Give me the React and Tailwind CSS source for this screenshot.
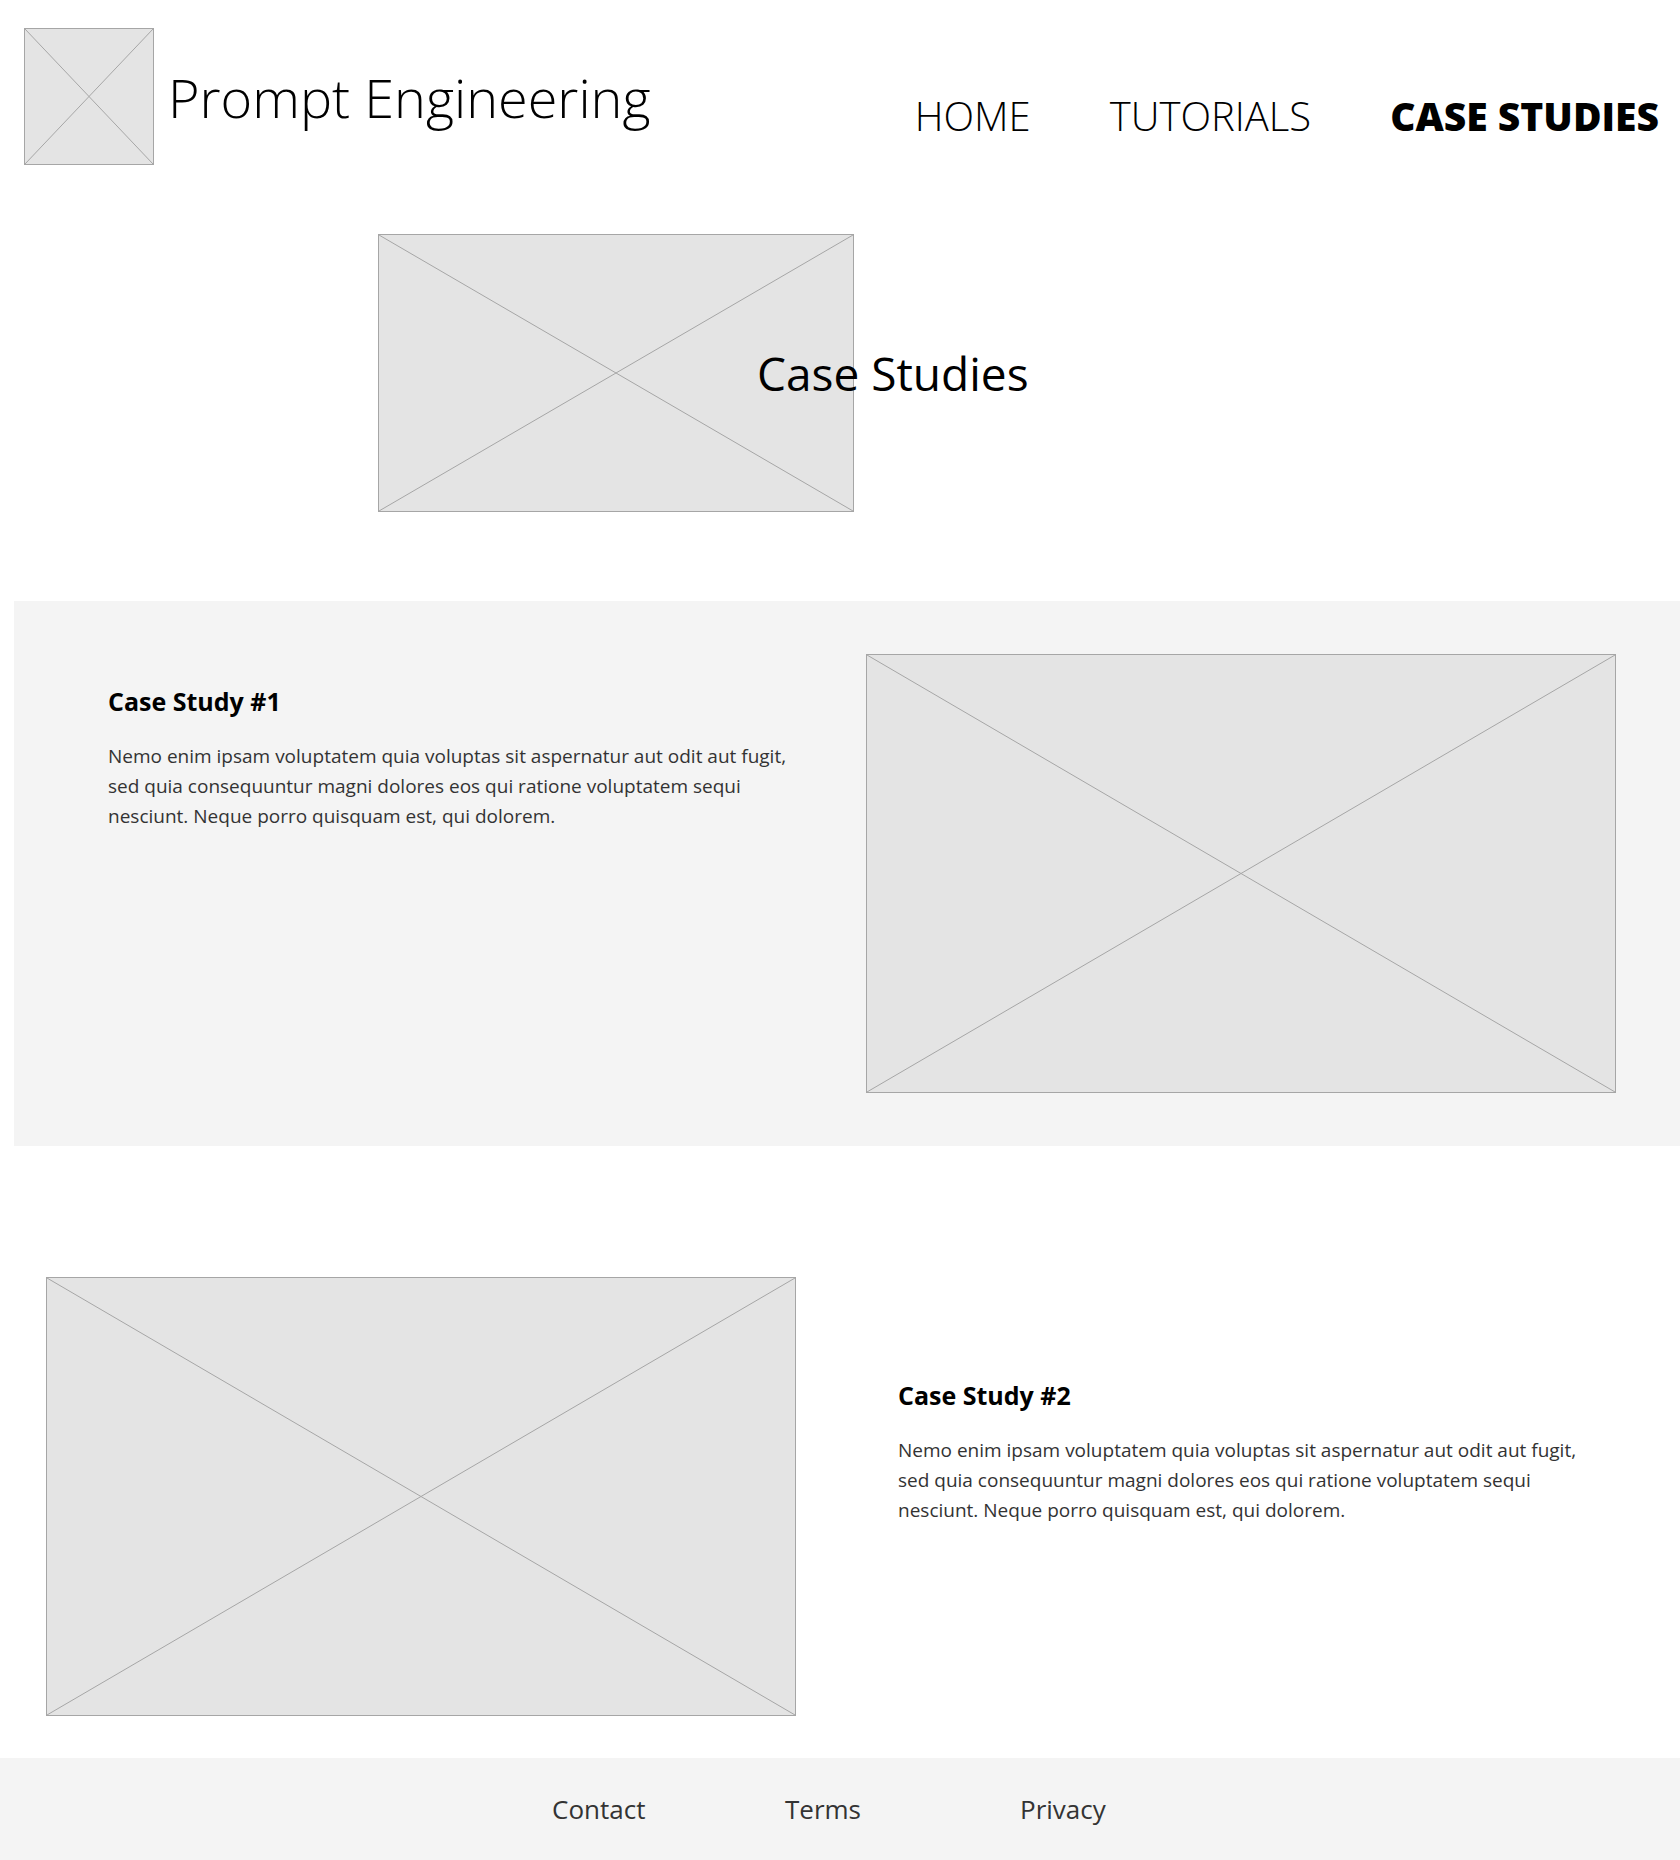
import React from "react";

const font = { fontFamily: "'Open Sans', 'Noto Sans', sans-serif" };

const Placeholder = ({ className }) => (
    <div className={`relative bg-[#e4e4e4] border border-[#a6a6a6] ${className}`}>
        <svg className="absolute inset-0 w-full h-full" viewBox="0 0 100 100" preserveAspectRatio="none">
            <line x1="0" y1="0" x2="100" y2="100" stroke="#a6a6a6" strokeWidth="1" vectorEffect="non-scaling-stroke" />
            <line x1="100" y1="0" x2="0" y2="100" stroke="#a6a6a6" strokeWidth="1" vectorEffect="non-scaling-stroke" />
        </svg>
    </div>
);

const CaseText = ({ title }) => (
    <div>
        <h2 className="text-[25px] font-bold text-black leading-[30px]">{title}</h2>
        <p className="mt-[25px] text-[19px] leading-[30px] text-[#333]">
            Nemo enim ipsam voluptatem quia voluptas sit aspernatur aut odit aut fugit,<br />
            sed quia consequuntur magni dolores eos qui ratione voluptatem sequi<br />
            nesciunt. Neque porro quisquam est, qui dolorem.
        </p>
    </div>
);

const App = () => {
    return (
        <div className="w-[1680px] h-[1860px] bg-white overflow-hidden" style={font}>
            {/* header */}
            <header className="flex items-start pl-[24px] pt-[28px]">
                <Placeholder className="w-[130px] h-[137px] flex-none" />
                <h1 className="ml-[14px] mt-[37px] text-[54px] font-light leading-[64px] text-black">Prompt Engineering</h1>
                <nav className="ml-auto mt-[66px] flex items-center text-[40px] leading-[44px] text-black">
                    <a className="font-light">HOME</a>
                    <a className="ml-[79px] font-light">TUTORIALS</a>
                    <a className="ml-[79px] mr-[21px] text-[39px] font-extrabold">CASE STUDIES</a>
                </nav>
            </header>

            {/* hero */}
            <section className="flex items-center pl-[378px] mt-[69px]">
                <Placeholder className="w-[476px] h-[278px] flex-none" />
                <h1 className="relative -ml-[97px] text-[46px] leading-[56px] text-black">Case Studies</h1>
            </section>

            {/* case study 1 */}
            <section className="ml-[14px] mt-[89px] h-[545px] bg-[#f4f4f4] flex items-start justify-between pl-[94px] pr-[64px] pt-[53px]">
                <div className="pt-[32px]">
                    <CaseText title="Case Study #1" />
                </div>
                <Placeholder className="w-[750px] h-[439px] flex-none" />
            </section>

            {/* case study 2 */}
            <section className="flex items-start pl-[46px] mt-[131px]">
                <Placeholder className="w-[750px] h-[439px] flex-none" />
                <div className="ml-[102px] mt-[103px]">
                    <CaseText title="Case Study #2" />
                </div>
            </section>

            {/* footer */}
            <footer className="mt-[42px] h-[102px] bg-[#f4f4f4] flex items-center pl-[552px] text-[26px] text-[#333]">
                <a className="w-[233px]">Contact</a>
                <a className="w-[235px]">Terms</a>
                <a>Privacy</a>
            </footer>
        </div>
    );
};

export default App;
